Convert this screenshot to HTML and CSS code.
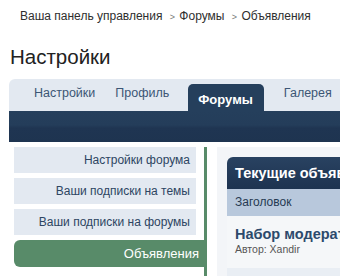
FILE: index.html
```html
<!DOCTYPE html>
<html lang="ru">
<head>
<meta charset="UTF-8">
<title>Настройки</title>
<link rel="stylesheet" href="styles.css">
</head>
<body>

<!-- Breadcrumb -->
<div class="breadcrumb">
    Ваша панель управления <span class="sep">&gt;</span> Форумы <span class="sep">&gt;</span> Объявления
</div>

<h1 class="page-title">Настройки</h1>

<!-- Tabs -->
<div class="tabs-wrap">
    <div class="tabs">
        <a class="tab">Настройки</a>
        <a class="tab">Профиль</a>
        <a class="tab active">Форумы</a>
        <a class="tab">Галерея</a>
    </div>
    <div class="tab-bar"></div>
</div>

<div class="content">
    <!-- Side menu -->
    <div class="side-menu">
        <div class="side-item">Настройки форума</div>
        <div class="side-item">Ваши подписки на темы</div>
        <div class="side-item">Ваши подписки на форумы</div>
        <div class="side-item active">Объявления</div>
    </div>

    <!-- Announcements -->
    <div class="main">
        <div class="panel-head">Текущие объявления</div>
        <div class="panel-cols">Заголовок</div>
        <div class="panel-row">
            <div class="row-title">Набор модераторов</div>
            <div class="row-meta">Автор: Xandir</div>
        </div>
        <div class="panel-row alt"></div>
    </div>
</div>

</body>
</html>
```

FILE: styles.css
```css
/* Base */
body {
    margin: 0;
    height: 276px;
    font-family: "Liberation Sans", Arial, sans-serif;
    color: #333;
    background: #fff;
    overflow: hidden;
}

/* Breadcrumb */
.breadcrumb {
    padding: 9px 0 0 20px;
    font-size: 12px;
    line-height: 14px;
    color: #2e2e2e;
    white-space: nowrap;
}
.breadcrumb .sep {
    font-size: 9px;
    color: #777;
    margin: 0 1px 0 4px;
}

/* Title */
.page-title {
    margin: 0;
    padding: 20px 0 0 10px;
    font-size: 20.5px;
    font-weight: normal;
    line-height: 26px;
    color: #222;
}

/* Tabs */
.tabs-wrap {
    margin: 9px 0 0 9px;
}
.tabs {
    display: flex;
    align-items: flex-end;
    height: 32px;
    padding-left: 15px;
    background: #e3e9f1;
    border-radius: 6px 0 0 0;
    white-space: nowrap;
}
.tab {
    padding: 0 10px 11px;
    font-size: 12.5px;
    line-height: 14px;
    color: #3c5675;
}
.tab.active {
    margin: 0 10px 0 9px;
    padding: 5px 11px 0 10px;
    height: 22px;
    line-height: 22px;
    font-size: 13px;
    font-weight: bold;
    color: #fff;
    background: #253f5c;
    border-radius: 5px 5px 0 0;
}
.tab-bar {
    height: 31px;
    background: linear-gradient(#253f5c 0, #243d5a 45%, #1f3552 55%, #1e3450 100%);
}

/* Layout */
.content {
    display: flex;
    margin: 5px 0 0 14px;
}

/* Side menu */
.side-menu {
    width: 190px;
    flex: none;
    border-right: 3px solid #588b69;
    padding-bottom: 10px;
}
.side-item {
    height: 26px;
    line-height: 26px;
    margin: 0 8px 5px 0;
    padding-right: 6px;
    text-align: right;
    font-size: 12px;
    color: #2d4562;
    background: #e3e9f1;
    white-space: nowrap;
}
.side-item.active {
    height: 27px;
    line-height: 27px;
    margin-right: 0;
    padding-right: 5px;
    font-size: 13px;
    color: #fff;
    background: #588b69;
    border-radius: 6px 0 0 6px;
}

/* Main panel */
.main {
    flex: 1;
    margin-left: 10px;
    padding: 10px 0 0 10px;
    background: #f3f5f8;
    white-space: nowrap;
    overflow: hidden;
}
.panel-head {
    height: 32px;
    line-height: 32px;
    padding-left: 8px;
    font-size: 14.5px;
    font-weight: bold;
    color: #fff;
    background: linear-gradient(#294261, #1d3350);
    border-radius: 6px 0 0 0;
}
.panel-cols {
    height: 27px;
    line-height: 27px;
    padding-left: 8px;
    font-size: 12px;
    color: #263a52;
    background: #b8c8dc;
}
.panel-row {
    height: 52px;
    padding-left: 8px;
    background: #f5f7f9;
}
.row-title {
    padding-top: 10px;
    font-size: 14.5px;
    font-weight: bold;
    line-height: 16px;
    color: #2c4a6c;
}
.row-meta {
    padding-top: 1px;
    font-size: 10.5px;
    line-height: 12px;
    color: #555;
}
.panel-row.alt {
    background: #e9eef4;
}
```
